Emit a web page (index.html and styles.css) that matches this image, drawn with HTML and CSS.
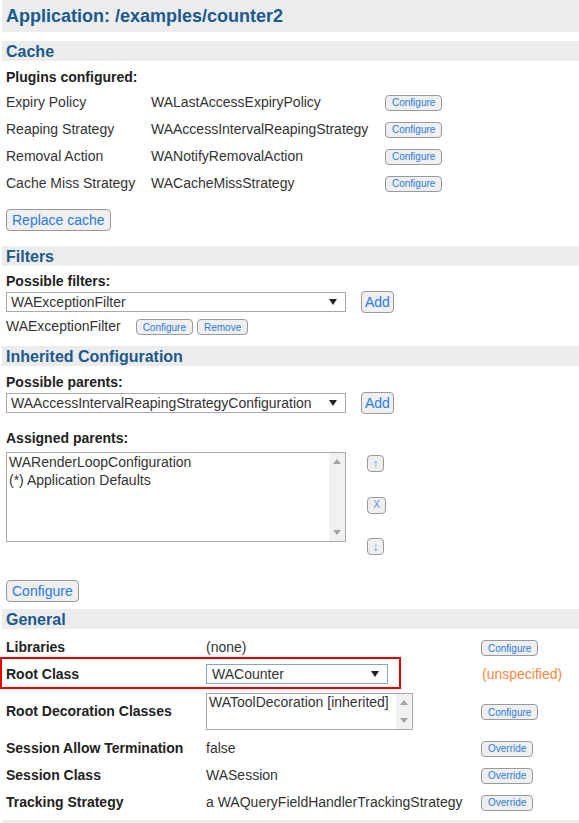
FILE: index.html
```html
<!DOCTYPE html>
<html>
<head>
<meta charset="utf-8">
<link rel="stylesheet" href="styles.css">
</head>
<body>
<div class="page">
  <h1 class="title">Application: /examples/counter2</h1>

  <h2 class="sec-head first">Cache</h2>
  <div class="label plugins-title">Plugins configured:</div>
  <div class="plugin-grid">
    <span>Expiry Policy</span><span>WALastAccessExpiryPolicy</span><span><button class="btn-sm">Configure</button></span>
    <span>Reaping Strategy</span><span>WAAccessIntervalReapingStrategy</span><span><button class="btn-sm">Configure</button></span>
    <span>Removal Action</span><span>WANotifyRemovalAction</span><span><button class="btn-sm">Configure</button></span>
    <span>Cache Miss Strategy</span><span>WACacheMissStrategy</span><span><button class="btn-sm">Configure</button></span>
  </div>
  <div class="indent replace-wrap"><button class="btn">Replace cache</button></div>

  <h2 class="sec-head filters-head">Filters</h2>
  <div class="label field-label filters-label">Possible filters:</div>
  <div class="indent select-row">
    <div class="select wide"><span>WAExceptionFilter</span><svg class="caret" width="8" height="6" viewBox="0 0 8 6"><polygon points="0,0 8,0 4,6" fill="#222"/></svg></div>
    <button class="btn add">Add</button>
  </div>
  <div class="indent filter-item">
    <span class="filter-name">WAExceptionFilter</span>
    <button class="btn-sm">Configure</button>
    <button class="btn-sm">Remove</button>
  </div>

  <h2 class="sec-head inherited-head">Inherited Configuration</h2>
  <div class="label field-label parents-label">Possible parents:</div>
  <div class="indent select-row">
    <div class="select wide"><span>WAAccessIntervalReapingStrategyConfiguration</span><svg class="caret" width="8" height="6" viewBox="0 0 8 6"><polygon points="0,0 8,0 4,6" fill="#222"/></svg></div>
    <button class="btn add">Add</button>
  </div>
  <div class="label field-label assigned-label">Assigned parents:</div>
  <div class="indent list-row">
    <div class="listbox big">
      <div class="list-items">
        <div>WARenderLoopConfiguration</div>
        <div>(*) Application Defaults</div>
      </div>
      <div class="scrollbar">
        <svg width="8" height="5" viewBox="0 0 8 5"><polygon points="0,5 8,5 4,0" fill="#a3a3a3"/></svg>
        <svg width="8" height="5" viewBox="0 0 8 5"><polygon points="0,0 8,0 4,5" fill="#a3a3a3"/></svg>
      </div>
    </div>
    <div class="move-col">
      <button class="btn-arrow">↑</button>
      <button class="btn-arrow x">X</button>
      <button class="btn-arrow">↓</button>
    </div>
  </div>
  <div class="indent configure-wrap"><button class="btn">Configure</button></div>

  <h2 class="sec-head general-head">General</h2>
  <div class="gen-row libs">
    <span class="label">Libraries</span>
    <span>(none)</span>
    <span><button class="btn-sm">Configure</button></span>
  </div>
  <div class="gen-row root">
    <span class="label">Root Class</span>
    <span><div class="select root-select"><span>WACounter</span><svg class="caret" width="8" height="6" viewBox="0 0 8 6"><polygon points="0,0 8,0 4,6" fill="#222"/></svg></div></span>
    <span class="unspecified">(unspecified)</span>
  </div>
  <div class="gen-row deco">
    <span class="label">Root Decoration Classes</span>
    <span>
      <div class="listbox small">
        <div class="list-items"><div>WAToolDecoration [inherited]</div></div>
        <div class="scrollbar">
          <svg width="8" height="5" viewBox="0 0 8 5"><polygon points="0,5 8,5 4,0" fill="#a3a3a3"/></svg>
          <svg width="8" height="5" viewBox="0 0 8 5"><polygon points="0,0 8,0 4,5" fill="#a3a3a3"/></svg>
        </div>
      </div>
    </span>
    <span><button class="btn-sm">Configure</button></span>
  </div>
  <div class="gen-row sess">
    <span class="label">Session Allow Termination</span>
    <span>false</span>
    <span><button class="btn-sm">Override</button></span>
  </div>
  <div class="gen-row sess">
    <span class="label">Session Class</span>
    <span>WASession</span>
    <span><button class="btn-sm">Override</button></span>
  </div>
  <div class="gen-row sess">
    <span class="label">Tracking Strategy</span>
    <span>a WAQueryFieldHandlerTrackingStrategy</span>
    <span><button class="btn-sm">Override</button></span>
  </div>
  <div class="sec-head next-head"></div>
</div>
</body>
</html>
```

FILE: styles.css
```css
html, body {
  margin: 0;
  padding: 0;
  background: #ffffff;
}
body {
  font-family: "Liberation Sans", Arial, sans-serif;
  font-size: 14px;
  color: #333333;
}
.page {
  padding-left: 2px;
}
.title {
  margin: 0;
  height: 32px;
  line-height: 33px;
  padding-left: 4px;
  background: #ececec;
  color: #1b5a8c;
  font-size: 18px;
  font-weight: bold;
}
.sec-head {
  margin: 0;
  height: 20px;
  line-height: 22px;
  padding-left: 4px;
  background: #ececec;
  color: #1b5a8c;
  font-size: 16px;
  font-weight: bold;
}
.sec-head.first { margin-top: 9px; }
.filters-head { margin-top: 15px; }
.inherited-head { margin-top: 8px; }
.general-head { margin-top: 7px; }
.next-head { margin-top: 5px; height: 20px; }

.label {
  font-weight: bold;
  color: #222222;
}
.indent { padding-left: 4px; }

.plugins-title {
  margin-top: 3px;
  height: 24px;
  line-height: 26px;
  padding-left: 4px;
}
.plugin-grid {
  display: grid;
  grid-template-columns: 145px 234px auto;
  grid-auto-rows: 27px;
  align-items: center;
  padding-left: 4px;
}
.plugin-grid > span { display: flex; align-items: center; }

.btn {
  font-family: "Liberation Sans", Arial, sans-serif;
  font-size: 14px;
  color: #2a7be0;
  background: #efefef;
  border: 1px solid #9a9a9a;
  border-radius: 4px;
  height: 22px;
  padding: 0 5px;
  margin: 0;
  line-height: 18px;
}
.btn.add { padding: 0 3px; }
.btn-sm {
  font-family: "Liberation Sans", Arial, sans-serif;
  font-size: 10px;
  color: #2a7be0;
  background: #efefef;
  border: 1px solid #9a9a9a;
  border-radius: 4px;
  height: 16px;
  padding: 0 6px;
  margin: 0;
  margin-top: 2px;
  line-height: 13px;
}
.btn-arrow {
  font-family: "Liberation Sans", Arial, sans-serif;
  font-size: 12px;
  color: #5b8fe0;
  background: #efefef;
  border: 1px solid #9a9a9a;
  border-radius: 4px;
  width: 17px;
  height: 17px;
  padding: 0;
  margin: 0;
  line-height: 14px;
}
.btn-arrow.x { width: 19px; font-size: 10px; }

.replace-wrap { margin-top: 13px; display: flex; }
.configure-wrap { margin-top: 25px; display: flex; }

.field-label {
  height: 20px;
  line-height: 20px;
  padding-left: 4px;
}
.filters-label { margin-top: 5px; }
.parents-label { margin-top: 6px; }
.assigned-label { margin-top: 14px; }

.select-row {
  display: flex;
  align-items: center;
  gap: 15px;
  height: 22px;
}
.select {
  box-sizing: border-box;
  height: 20px;
  border: 1px solid #a9a9a9;
  background: #ffffff;
  display: flex;
  align-items: center;
  justify-content: space-between;
  padding: 0 8px 0 4px;
  color: #333333;
  font-size: 14px;
}
.select.wide { width: 340px; }
.root-select {
  width: 182px;
  border-color: #7fa6d9;
  padding-left: 5px;
}

.filter-item {
  margin-top: 1px;
  height: 24px;
  display: flex;
  align-items: center;
}
.filter-name { margin-right: 15px; }
.filter-item .btn-sm + .btn-sm { margin-left: 4px; }

.list-row {
  margin-top: 4px;
  display: flex;
  align-items: flex-start;
}
.listbox {
  box-sizing: border-box;
  border: 1px solid #a9a9a9;
  background: #ffffff;
  display: flex;
}
.listbox.big { width: 340px; height: 90px; }
.listbox.small { width: 207px; height: 37px; }
.list-items {
  flex: 1;
  padding: 0 0 0 2px;
  line-height: 18px;
  color: #333333;
}
.listbox.small .list-items { line-height: 17px; }
.scrollbar {
  width: 16px;
  background: #f1f1f1;
  display: flex;
  flex-direction: column;
  align-items: center;
  justify-content: space-between;
  padding: 6px 0;
}
.move-col {
  margin-left: 21px;
  margin-top: 3px;
  height: 100px;
  display: flex;
  flex-direction: column;
  justify-content: space-between;
  align-items: flex-start;
}

.gen-row {
  display: grid;
  grid-template-columns: 200px 275px auto;
  align-items: center;
  padding-left: 4px;
}
.gen-row > span { display: flex; align-items: center; }
.gen-row.libs { margin-top: 5px; height: 26px; }
.gen-row.root { height: 28px; position: relative; }
.gen-row.root::after {
  content: "";
  position: absolute;
  left: -2px;
  top: -3px;
  width: 401px;
  height: 32px;
  box-sizing: border-box;
  border: 2px solid #e60000;
}
.gen-row.deco { height: 46px; }
.gen-row.sess { height: 27px; }
.unspecified {
  color: #f7873f;
  padding-left: 1px;
}
```
